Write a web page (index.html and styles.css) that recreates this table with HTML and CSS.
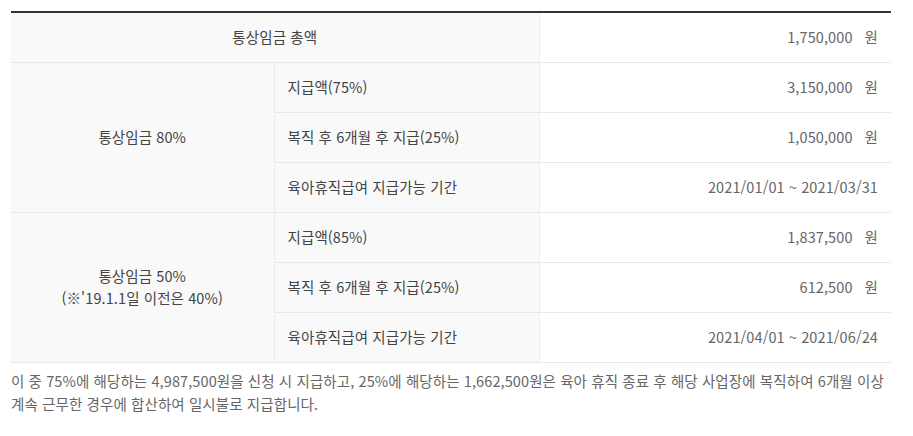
FILE: index.html
```html
<!DOCTYPE html>
<html lang="ko">
<head>
<meta charset="utf-8">
<link rel="stylesheet" href="styles.css">
</head>
<body>
<div class="wrap">
  <table class="pay">
    <colgroup>
      <col class="c1"><col class="c2"><col class="c3">
    </colgroup>
    <tbody>
      <tr>
        <th colspan="2" class="center">통상임금 총액</th>
        <td class="val">1,750,000<span class="won">원</span></td>
      </tr>
      <tr>
        <th rowspan="3" class="center">통상임금 80%</th>
        <th class="left">지급액(75%)</th>
        <td class="val">3,150,000<span class="won">원</span></td>
      </tr>
      <tr>
        <th class="left">복직 후 6개월 후 지급(25%)</th>
        <td class="val">1,050,000<span class="won">원</span></td>
      </tr>
      <tr>
        <th class="left">육아휴직급여 지급가능 기간</th>
        <td class="val">2021/01/01 ~ 2021/03/31</td>
      </tr>
      <tr>
        <th rowspan="3" class="center">통상임금 50%<br>(※'19.1.1일 이전은 40%)</th>
        <th class="left">지급액(85%)</th>
        <td class="val">1,837,500<span class="won">원</span></td>
      </tr>
      <tr>
        <th class="left">복직 후 6개월 후 지급(25%)</th>
        <td class="val">612,500<span class="won">원</span></td>
      </tr>
      <tr>
        <th class="left">육아휴직급여 지급가능 기간</th>
        <td class="val">2021/04/01 ~ 2021/06/24</td>
      </tr>
    </tbody>
  </table>
  <p class="note">이 중 75%에 해당하는 4,987,500원을 신청 시 지급하고, 25%에 해당하는 1,662,500원은 육아 휴직 종료 후 해당 사업장에 복직하여 6개월 이상 계속 근무한 경우에 합산하여 일시불로 지급합니다.</p>
</div>
</body>
</html>
```

FILE: styles.css
```css
html, body {
  margin: 0;
  padding: 0;
  background: #fff;
}
body {
  font-family: "Noto Sans CJK KR", "Noto Sans", sans-serif;
  color: #555;
  font-size: 14.5px;
  letter-spacing: 0.1px;
}
.wrap {
  width: 880px;
  padding: 11px 0 0 11px;
}
.pay {
  width: 880px;
  border-collapse: collapse;
  table-layout: fixed;
  border-top: 2px solid #333;
}
.c1 { width: 263px; }
.c2 { width: 265px; }
.c3 { width: 352px; }
.pay th, .pay td {
  box-sizing: border-box;
  height: 50px;
  padding: 0 14px;
  border-bottom: 1px solid #e8e8e8;
  border-left: 1px solid #ececec;
  font-weight: normal;
  line-height: 22px;
}
.pay tr > :first-child { border-left: 0; }
.pay tr:nth-child(3) > th,
.pay tr:nth-child(4) > th,
.pay tr:nth-child(6) > th,
.pay tr:nth-child(7) > th { border-left: 1px solid #ececec; }
.pay th {
  background: #f9f9fa;
  color: #444;
}
.pay th.center { text-align: center; }
.pay th.left { text-align: left; padding-left: 13px; }
.pay td.val {
  text-align: right;
  background: #fff;
  color: #666;
  padding-right: 13px;
}
.won {
  margin-left: 12px;
}
.note {
  margin: 6px 0 0 0;
  line-height: 23px;
  color: #666;
  word-break: keep-all;
}
```
